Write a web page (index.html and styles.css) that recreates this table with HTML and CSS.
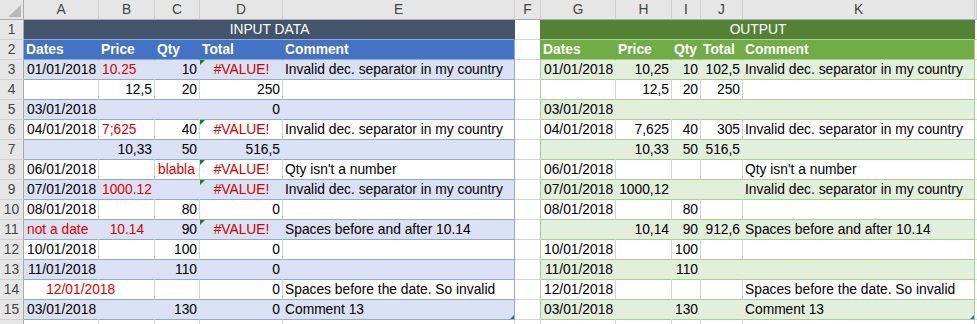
FILE: index.html
```html
<!DOCTYPE html>
<html>
<head>
<meta charset="utf-8">
<link rel="stylesheet" href="styles.css">
</head>
<body>
<div class="sheet">
  <div class="row hdr">
    <div class="corner"><svg width="23" height="19" viewBox="0 0 23 19"><polygon points="21,5 21,17 8,17" fill="#b9b9b9"/></svg></div>
    <div>A</div><div>B</div><div>C</div><div>D</div><div>E</div><div>F</div><div>G</div><div>H</div><div>I</div><div>J</div><div>K</div><div></div>
  </div>

  <div class="row">
    <div class="rh">1</div>
    <div class="title-in">INPUT DATA</div>
    <div class="f f1"></div>
    <div class="title-out">OUTPUT</div>
    <div class="x"></div>
  </div>

  <div class="row">
    <div class="rh">2</div>
    <div class="th-in">Dates</div><div class="th-in">Price</div><div class="th-in">Qty</div><div class="th-in">Total</div><div class="th-in last">Comment</div>
    <div class="f f2"></div>
    <div class="th-out">Dates</div><div class="th-out">Price</div><div class="th-out">Qty</div><div class="th-out">Total</div><div class="th-out last">Comment</div>
    <div class="x"></div>
  </div>

  <div class="row band">
    <div class="rh">3</div>
    <div class="i r">01/01/2018</div><div class="i red">10.25</div><div class="i r">10</div><div class="i err">#VALUE!</div><div class="i ie">Invalid dec. separator in my country</div>
    <div class="f"></div>
    <div class="o r">01/01/2018</div><div class="o r">10,25</div><div class="o r">10</div><div class="o r">102,5</div><div class="o oe">Invalid dec. separator in my country</div>
    <div class="x"></div>
  </div>

  <div class="row">
    <div class="rh">4</div>
    <div class="i"></div><div class="i r">12,5</div><div class="i r">20</div><div class="i r">250</div><div class="i ie"></div>
    <div class="f"></div>
    <div class="o"></div><div class="o r">12,5</div><div class="o r">20</div><div class="o r">250</div><div class="o oe"></div>
    <div class="x"></div>
  </div>

  <div class="row band">
    <div class="rh">5</div>
    <div class="i r">03/01/2018</div><div class="i"></div><div class="i"></div><div class="i r">0</div><div class="i ie"></div>
    <div class="f"></div>
    <div class="o r">03/01/2018</div><div class="o"></div><div class="o"></div><div class="o"></div><div class="o oe"></div>
    <div class="x"></div>
  </div>

  <div class="row">
    <div class="rh">6</div>
    <div class="i r">04/01/2018</div><div class="i red">7;625</div><div class="i r">40</div><div class="i err">#VALUE!</div><div class="i ie">Invalid dec. separator in my country</div>
    <div class="f"></div>
    <div class="o r">04/01/2018</div><div class="o r">7,625</div><div class="o r">40</div><div class="o r">305</div><div class="o oe">Invalid dec. separator in my country</div>
    <div class="x"></div>
  </div>

  <div class="row band">
    <div class="rh">7</div>
    <div class="i"></div><div class="i r">10,33</div><div class="i r">50</div><div class="i r">516,5</div><div class="i ie"></div>
    <div class="f"></div>
    <div class="o"></div><div class="o r">10,33</div><div class="o r">50</div><div class="o r">516,5</div><div class="o oe"></div>
    <div class="x"></div>
  </div>

  <div class="row">
    <div class="rh">8</div>
    <div class="i r">06/01/2018</div><div class="i"></div><div class="i red">blabla</div><div class="i err">#VALUE!</div><div class="i ie">Qty isn't a number</div>
    <div class="f"></div>
    <div class="o r">06/01/2018</div><div class="o"></div><div class="o"></div><div class="o"></div><div class="o oe">Qty isn't a number</div>
    <div class="x"></div>
  </div>

  <div class="row band">
    <div class="rh">9</div>
    <div class="i r">07/01/2018</div><div class="i red">1000.12</div><div class="i"></div><div class="i err">#VALUE!</div><div class="i ie">Invalid dec. separator in my country</div>
    <div class="f"></div>
    <div class="o r">07/01/2018</div><div class="o r">1000,12</div><div class="o"></div><div class="o"></div><div class="o oe">Invalid dec. separator in my country</div>
    <div class="x"></div>
  </div>

  <div class="row">
    <div class="rh">10</div>
    <div class="i r">08/01/2018</div><div class="i"></div><div class="i r">80</div><div class="i r">0</div><div class="i ie"></div>
    <div class="f"></div>
    <div class="o r">08/01/2018</div><div class="o"></div><div class="o r">80</div><div class="o"></div><div class="o oe"></div>
    <div class="x"></div>
  </div>

  <div class="row band">
    <div class="rh">11</div>
    <div class="i red">not a date</div><div class="i red">  10.14 </div><div class="i r">90</div><div class="i err">#VALUE!</div><div class="i ie">Spaces before and after 10.14</div>
    <div class="f"></div>
    <div class="o"></div><div class="o r">10,14</div><div class="o r">90</div><div class="o r">912,6</div><div class="o oe">Spaces before and after 10.14</div>
    <div class="x"></div>
  </div>

  <div class="row">
    <div class="rh">12</div>
    <div class="i r">10/01/2018</div><div class="i"></div><div class="i r">100</div><div class="i r">0</div><div class="i ie"></div>
    <div class="f"></div>
    <div class="o r">10/01/2018</div><div class="o"></div><div class="o r">100</div><div class="o"></div><div class="o oe"></div>
    <div class="x"></div>
  </div>

  <div class="row band">
    <div class="rh">13</div>
    <div class="i r">11/01/2018</div><div class="i"></div><div class="i r">110</div><div class="i r">0</div><div class="i ie"></div>
    <div class="f"></div>
    <div class="o r">11/01/2018</div><div class="o"></div><div class="o r">110</div><div class="o"></div><div class="o oe"></div>
    <div class="x"></div>
  </div>

  <div class="row">
    <div class="rh">14</div>
    <div class="i red span2">     12/01/2018</div><div class="i"></div><div class="i r">0</div><div class="i ie">Spaces before the date. So invalid</div>
    <div class="f"></div>
    <div class="o r">12/01/2018</div><div class="o"></div><div class="o"></div><div class="o"></div><div class="o oe">Spaces before the date. So invalid</div>
    <div class="x"></div>
  </div>

  <div class="row band">
    <div class="rh">15</div>
    <div class="i r">03/01/2018</div><div class="i"></div><div class="i r">130</div><div class="i r">0</div><div class="i ie handle">Comment 13</div>
    <div class="f"></div>
    <div class="o r">03/01/2018</div><div class="o"></div><div class="o r">130</div><div class="o"></div><div class="o oe handle">Comment 13</div>
    <div class="x"></div>
  </div>

  <div class="row">
    <div class="rh"></div>
    <div></div><div></div><div></div><div></div><div></div><div></div><div></div><div></div><div></div><div></div><div></div><div></div>
  </div>
</div>
</body>
</html>
```

FILE: styles.css
```css
* {
  box-sizing: border-box;
}

html, body {
  margin: 0;
  padding: 0;
  background: #ffffff;
  overflow: hidden;
}

body {
  font-family: "Liberation Sans", Arial, sans-serif;
  font-size: 13.8px;
  color: #000000;
}

.sheet {
  width: 977px;
}

.row {
  display: grid;
  grid-template-columns: 24px 75px 56px 45px 83px 232px 26px 75px 56px 29px 42px 232px 2px;
  height: 20px;
  background: #ffffff;
}

.row > div {
  border-right: 1px solid #d4d4d4;
  border-bottom: 1px solid #d4d4d4;
  padding: 1px 2px 0 3px;
  line-height: 18px;
  white-space: pre;
  overflow: visible;
  min-width: 0;
}

/* column header row */
.hdr > div {
  background: #e6e6e6;
  border-right-color: #cfcfcf;
  border-bottom-color: #ababab;
  text-align: center;
  color: #444444;
  padding: 1px 0 0 0;
}

.hdr > .corner {
  border-right-color: #ababab;
  padding: 0;
  line-height: 0;
}

/* row numbers */
.row > .rh {
  background: #e6e6e6;
  border-right-color: #ababab;
  border-bottom-color: #d0d0d0;
  text-align: center;
  color: #444444;
  padding: 1px 0 0 0;
}

/* titles */
.row > .title-in {
  grid-column: span 5;
  background: #44546a;
  color: #ffffff;
  text-align: center;
  border-right-color: #44546a;
  border-bottom-color: #8ea9db;
}

.row > .title-out {
  grid-column: span 5;
  background: #548235;
  color: #ffffff;
  text-align: center;
  border-right-color: #548235;
  border-bottom-color: #a9d08e;
}

/* table headers */
.row > .th-in {
  background: #4472c4;
  color: #ffffff;
  font-weight: bold;
  border-right-color: #4472c4;
  border-bottom-color: #8ea9db;
  padding-left: 2px;
}

.row > .th-in.last {
  border-right-color: #8ea9db;
}

.row > .th-out {
  background: #70ad47;
  color: #ffffff;
  font-weight: bold;
  border-right-color: #70ad47;
  border-bottom-color: #a9d08e;
  padding-left: 2px;
}

.row > .th-out.last {
  border-right-color: #a9d08e;
}

/* F column: left edge of output table */
.row > .f {
  border-right-color: #a9d08e;
}

.row > .f1 {
  border-right-color: #548235;
}

.row > .f2 {
  border-right-color: #70ad47;
}

/* input table body */
.row > .i {
  border-bottom-color: #8ea9db;
}

.band > .i {
  background: #d9e1f2;
  border-right-color: #d9e1f2;
}

.row > .i.ie {
  border-right-color: #8ea9db;
  padding-left: 2px;
}

/* output table body */
.row > .o {
  border-bottom-color: #a9d08e;
}

.band > .o {
  background: #e2efda;
  border-right-color: #e2efda;
}

.row > .o.oe {
  border-right-color: #a9d08e;
  padding-left: 2px;
}

.row > .span2 {
  grid-column: span 2;
}

.row > .r {
  text-align: right;
}

.red {
  color: #e00000;
}

.row > .err {
  position: relative;
  color: #d00000;
  text-align: center;
}

.err::before {
  content: "";
  position: absolute;
  left: 0;
  top: 0;
  border-top: 5px solid #11870f;
  border-right: 5px solid transparent;
}

.handle {
  position: relative;
}

.handle::after {
  content: "";
  position: absolute;
  right: 0;
  bottom: 0;
  border-bottom: 4px solid #3a62b0;
  border-left: 4px solid transparent;
}
```
